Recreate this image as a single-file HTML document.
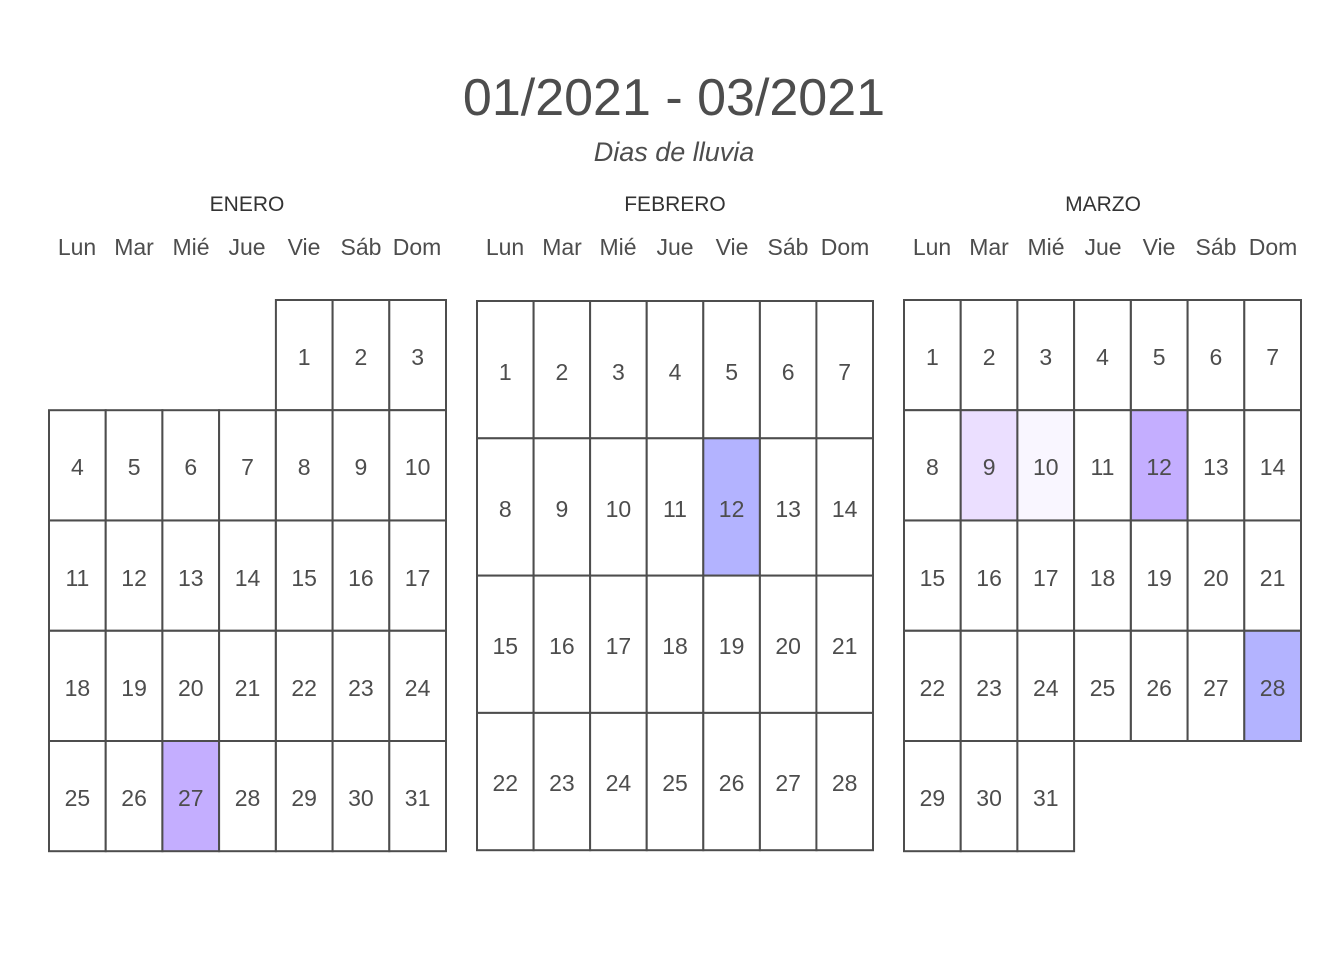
<!DOCTYPE html>
<html><head><meta charset="utf-8"><style>
html,body{margin:0;padding:0;background:#fff;}
svg{display:block;font-family:"Liberation Sans",Arial,sans-serif;}
rect{stroke:#4d4d4d;stroke-width:2;fill:#fff;}
.d{font-size:23px;fill:#4d4d4d;text-anchor:middle;}
.h{font-size:23px;fill:#4d4d4d;text-anchor:middle;}
.m{font-size:21px;fill:#333;text-anchor:middle;}
</style></head><body>
<svg width="1344" height="960" viewBox="0 0 1344 960">
<text x="674" y="115" font-size="52" fill="#4d4d4d" text-anchor="middle">01/2021 - 03/2021</text>
<text x="674" y="161" font-size="27" fill="#4d4d4d" font-style="italic" text-anchor="middle">Dias de lluvia</text>
<text class="m" x="247" y="211">ENERO</text>
<text class="m" x="675" y="211">FEBRERO</text>
<text class="m" x="1103" y="211">MARZO</text>
<g class="h">
<text class="h" x="77" y="255">Lun</text><text class="h" x="134" y="255">Mar</text><text class="h" x="191" y="255">Mié</text><text class="h" x="247" y="255">Jue</text><text class="h" x="304" y="255">Vie</text><text class="h" x="361" y="255">Sáb</text><text class="h" x="417" y="255">Dom</text>
<text class="h" x="505" y="255">Lun</text><text class="h" x="562" y="255">Mar</text><text class="h" x="618" y="255">Mié</text><text class="h" x="675" y="255">Jue</text><text class="h" x="732" y="255">Vie</text><text class="h" x="788" y="255">Sáb</text><text class="h" x="845" y="255">Dom</text>
<text class="h" x="932" y="255">Lun</text><text class="h" x="989" y="255">Mar</text><text class="h" x="1046" y="255">Mié</text><text class="h" x="1103" y="255">Jue</text><text class="h" x="1159" y="255">Vie</text><text class="h" x="1216" y="255">Sáb</text><text class="h" x="1273" y="255">Dom</text>
</g>
<!-- ENERO -->
<g>
<rect x="275.9" y="300" width="56.7" height="110.2"/><rect x="332.6" y="300" width="56.7" height="110.2"/><rect x="389.3" y="300" width="56.7" height="110.2"/>
<text class="d" x="304.2" y="365">1</text><text class="d" x="360.9" y="365">2</text><text class="d" x="417.6" y="365">3</text>
<rect x="49" y="410.2" width="56.7" height="110.2"/><rect x="105.7" y="410.2" width="56.7" height="110.2"/><rect x="162.4" y="410.2" width="56.7" height="110.2"/><rect x="219.1" y="410.2" width="56.7" height="110.2"/><rect x="275.9" y="410.2" width="56.7" height="110.2"/><rect x="332.6" y="410.2" width="56.7" height="110.2"/><rect x="389.3" y="410.2" width="56.7" height="110.2"/>
<text class="d" x="77.4" y="475">4</text><text class="d" x="134.1" y="475">5</text><text class="d" x="190.8" y="475">6</text><text class="d" x="247.5" y="475">7</text><text class="d" x="304.2" y="475">8</text><text class="d" x="360.9" y="475">9</text><text class="d" x="417.6" y="475">10</text>
<rect x="49" y="520.5" width="56.7" height="110.2"/><rect x="105.7" y="520.5" width="56.7" height="110.2"/><rect x="162.4" y="520.5" width="56.7" height="110.2"/><rect x="219.1" y="520.5" width="56.7" height="110.2"/><rect x="275.9" y="520.5" width="56.7" height="110.2"/><rect x="332.6" y="520.5" width="56.7" height="110.2"/><rect x="389.3" y="520.5" width="56.7" height="110.2"/>
<text class="d" x="77.4" y="586">11</text><text class="d" x="134.1" y="586">12</text><text class="d" x="190.8" y="586">13</text><text class="d" x="247.5" y="586">14</text><text class="d" x="304.2" y="586">15</text><text class="d" x="360.9" y="586">16</text><text class="d" x="417.6" y="586">17</text>
<rect x="49" y="630.8" width="56.7" height="110.2"/><rect x="105.7" y="630.8" width="56.7" height="110.2"/><rect x="162.4" y="630.8" width="56.7" height="110.2"/><rect x="219.1" y="630.8" width="56.7" height="110.2"/><rect x="275.9" y="630.8" width="56.7" height="110.2"/><rect x="332.6" y="630.8" width="56.7" height="110.2"/><rect x="389.3" y="630.8" width="56.7" height="110.2"/>
<text class="d" x="77.4" y="696">18</text><text class="d" x="134.1" y="696">19</text><text class="d" x="190.8" y="696">20</text><text class="d" x="247.5" y="696">21</text><text class="d" x="304.2" y="696">22</text><text class="d" x="360.9" y="696">23</text><text class="d" x="417.6" y="696">24</text>
<rect x="49" y="741" width="56.7" height="110.2"/><rect x="105.7" y="741" width="56.7" height="110.2"/><rect x="162.4" y="741" width="56.7" height="110.2" style="fill:#c4aeff"/><rect x="219.1" y="741" width="56.7" height="110.2"/><rect x="275.9" y="741" width="56.7" height="110.2"/><rect x="332.6" y="741" width="56.7" height="110.2"/><rect x="389.3" y="741" width="56.7" height="110.2"/>
<text class="d" x="77.4" y="806">25</text><text class="d" x="134.1" y="806">26</text><text class="d" x="190.8" y="806">27</text><text class="d" x="247.5" y="806">28</text><text class="d" x="304.2" y="806">29</text><text class="d" x="360.9" y="806">30</text><text class="d" x="417.6" y="806">31</text>
</g>
<!-- FEBRERO -->
<g>
<rect x="477" y="301" width="56.6" height="137.3"/><rect x="533.6" y="301" width="56.6" height="137.3"/><rect x="590.1" y="301" width="56.6" height="137.3"/><rect x="646.7" y="301" width="56.6" height="137.3"/><rect x="703.3" y="301" width="56.6" height="137.3"/><rect x="759.9" y="301" width="56.6" height="137.3"/><rect x="816.4" y="301" width="56.6" height="137.3"/>
<text class="d" x="505.3" y="380">1</text><text class="d" x="561.9" y="380">2</text><text class="d" x="618.4" y="380">3</text><text class="d" x="675" y="380">4</text><text class="d" x="731.6" y="380">5</text><text class="d" x="788.2" y="380">6</text><text class="d" x="844.7" y="380">7</text>
<rect x="477" y="438.3" width="56.6" height="137.3"/><rect x="533.6" y="438.3" width="56.6" height="137.3"/><rect x="590.1" y="438.3" width="56.6" height="137.3"/><rect x="646.7" y="438.3" width="56.6" height="137.3"/><rect x="703.3" y="438.3" width="56.6" height="137.3" style="fill:#b3b3ff"/><rect x="759.9" y="438.3" width="56.6" height="137.3"/><rect x="816.4" y="438.3" width="56.6" height="137.3"/>
<text class="d" x="505.3" y="517">8</text><text class="d" x="561.9" y="517">9</text><text class="d" x="618.4" y="517">10</text><text class="d" x="675" y="517">11</text><text class="d" x="731.6" y="517">12</text><text class="d" x="788.2" y="517">13</text><text class="d" x="844.7" y="517">14</text>
<rect x="477" y="575.6" width="56.6" height="137.3"/><rect x="533.6" y="575.6" width="56.6" height="137.3"/><rect x="590.1" y="575.6" width="56.6" height="137.3"/><rect x="646.7" y="575.6" width="56.6" height="137.3"/><rect x="703.3" y="575.6" width="56.6" height="137.3"/><rect x="759.9" y="575.6" width="56.6" height="137.3"/><rect x="816.4" y="575.6" width="56.6" height="137.3"/>
<text class="d" x="505.3" y="654">15</text><text class="d" x="561.9" y="654">16</text><text class="d" x="618.4" y="654">17</text><text class="d" x="675" y="654">18</text><text class="d" x="731.6" y="654">19</text><text class="d" x="788.2" y="654">20</text><text class="d" x="844.7" y="654">21</text>
<rect x="477" y="712.9" width="56.6" height="137.3"/><rect x="533.6" y="712.9" width="56.6" height="137.3"/><rect x="590.1" y="712.9" width="56.6" height="137.3"/><rect x="646.7" y="712.9" width="56.6" height="137.3"/><rect x="703.3" y="712.9" width="56.6" height="137.3"/><rect x="759.9" y="712.9" width="56.6" height="137.3"/><rect x="816.4" y="712.9" width="56.6" height="137.3"/>
<text class="d" x="505.3" y="791">22</text><text class="d" x="561.9" y="791">23</text><text class="d" x="618.4" y="791">24</text><text class="d" x="675" y="791">25</text><text class="d" x="731.6" y="791">26</text><text class="d" x="788.2" y="791">27</text><text class="d" x="844.7" y="791">28</text>
</g>
<!-- MARZO -->
<g>
<rect x="904" y="300" width="56.7" height="110.2"/><rect x="960.7" y="300" width="56.7" height="110.2"/><rect x="1017.4" y="300" width="56.7" height="110.2"/><rect x="1074.1" y="300" width="56.7" height="110.2"/><rect x="1130.9" y="300" width="56.7" height="110.2"/><rect x="1187.6" y="300" width="56.7" height="110.2"/><rect x="1244.3" y="300" width="56.7" height="110.2"/>
<text class="d" x="932.4" y="365">1</text><text class="d" x="989.1" y="365">2</text><text class="d" x="1045.8" y="365">3</text><text class="d" x="1102.5" y="365">4</text><text class="d" x="1159.2" y="365">5</text><text class="d" x="1215.9" y="365">6</text><text class="d" x="1272.6" y="365">7</text>
<rect x="904" y="410.2" width="56.7" height="110.2"/><rect x="960.7" y="410.2" width="56.7" height="110.2" style="fill:#ebdfff"/><rect x="1017.4" y="410.2" width="56.7" height="110.2" style="fill:#f9f6ff"/><rect x="1074.1" y="410.2" width="56.7" height="110.2"/><rect x="1130.9" y="410.2" width="56.7" height="110.2" style="fill:#c4aeff"/><rect x="1187.6" y="410.2" width="56.7" height="110.2"/><rect x="1244.3" y="410.2" width="56.7" height="110.2"/>
<text class="d" x="932.4" y="475">8</text><text class="d" x="989.1" y="475">9</text><text class="d" x="1045.8" y="475">10</text><text class="d" x="1102.5" y="475">11</text><text class="d" x="1159.2" y="475">12</text><text class="d" x="1215.9" y="475">13</text><text class="d" x="1272.6" y="475">14</text>
<rect x="904" y="520.5" width="56.7" height="110.2"/><rect x="960.7" y="520.5" width="56.7" height="110.2"/><rect x="1017.4" y="520.5" width="56.7" height="110.2"/><rect x="1074.1" y="520.5" width="56.7" height="110.2"/><rect x="1130.9" y="520.5" width="56.7" height="110.2"/><rect x="1187.6" y="520.5" width="56.7" height="110.2"/><rect x="1244.3" y="520.5" width="56.7" height="110.2"/>
<text class="d" x="932.4" y="586">15</text><text class="d" x="989.1" y="586">16</text><text class="d" x="1045.8" y="586">17</text><text class="d" x="1102.5" y="586">18</text><text class="d" x="1159.2" y="586">19</text><text class="d" x="1215.9" y="586">20</text><text class="d" x="1272.6" y="586">21</text>
<rect x="904" y="630.8" width="56.7" height="110.2"/><rect x="960.7" y="630.8" width="56.7" height="110.2"/><rect x="1017.4" y="630.8" width="56.7" height="110.2"/><rect x="1074.1" y="630.8" width="56.7" height="110.2"/><rect x="1130.9" y="630.8" width="56.7" height="110.2"/><rect x="1187.6" y="630.8" width="56.7" height="110.2"/><rect x="1244.3" y="630.8" width="56.7" height="110.2" style="fill:#b3b3ff"/>
<text class="d" x="932.4" y="696">22</text><text class="d" x="989.1" y="696">23</text><text class="d" x="1045.8" y="696">24</text><text class="d" x="1102.5" y="696">25</text><text class="d" x="1159.2" y="696">26</text><text class="d" x="1215.9" y="696">27</text><text class="d" x="1272.6" y="696">28</text>
<rect x="904" y="741" width="56.7" height="110.2"/><rect x="960.7" y="741" width="56.7" height="110.2"/><rect x="1017.4" y="741" width="56.7" height="110.2"/>
<text class="d" x="932.4" y="806">29</text><text class="d" x="989.1" y="806">30</text><text class="d" x="1045.8" y="806">31</text>
</g>
</svg>
</body></html>
